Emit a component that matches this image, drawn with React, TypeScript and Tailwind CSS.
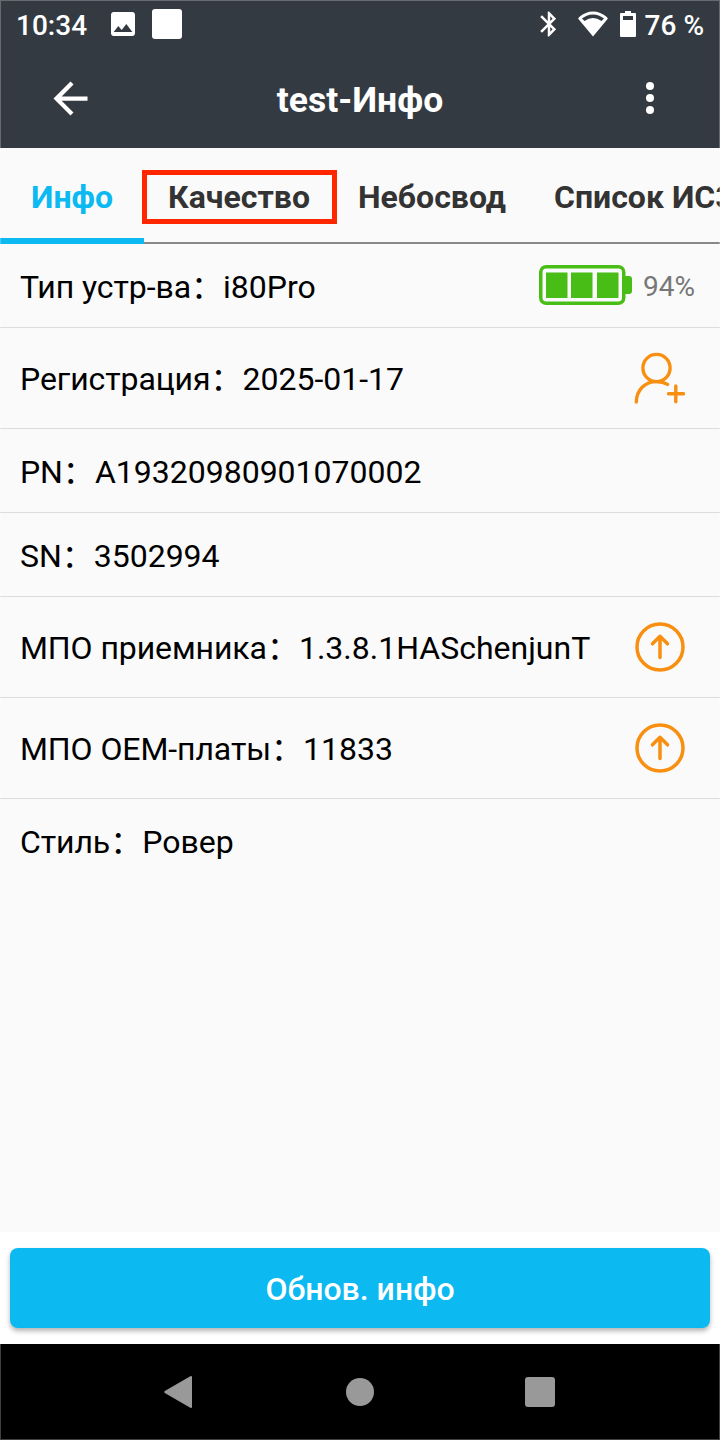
import React from 'react';

const TABS = ['Инфо', 'Качество', 'Небосвод', 'Список ИСЗ'];

type RowAction = 'battery' | 'register' | 'upgrade';

interface InfoItem {
  label: string;
  value: string;
  action?: RowAction;
}

const ITEMS: InfoItem[] = [
  { label: 'Тип устр-ва', value: 'i80Pro', action: 'battery' },
  { label: 'Регистрация', value: '2025-01-17', action: 'register' },
  { label: 'PN', value: 'A19320980901070002' },
  { label: 'SN', value: '3502994' },
  { label: 'МПО приемника', value: '1.3.8.1HASchenjunT', action: 'upgrade' },
  { label: 'МПО OEM-платы', value: '11833', action: 'upgrade' },
  { label: 'Стиль', value: 'Ровер' },
];

const StatusBar: React.FC = () => (
  <div className="flex h-[50px] items-center px-4 text-[28px] font-medium text-white">
    <span className="w-[91px] pt-[2px]">10:34</span>
    <svg className="-mt-[2px] h-8 w-8" viewBox="0 0 24 24" fill="currentColor">
      <path d="M21 19V5c0-1.1-.9-2-2-2H5c-1.1 0-2 .9-2 2v14c0 1.1.9 2 2 2h14c1.1 0 2-.9 2-2zM8.5 13.5l2.5 3.01L14.5 12l4.5 6H5l3.5-4.5z" />
    </svg>
    <div className="-mt-[2px] ml-[13px] h-[30px] w-[30px] rounded-[3px] bg-white" />

    <svg className="-mt-[2px] ml-auto h-[30px] w-[30px]" viewBox="0 0 24 24" fill="currentColor">
      <path d="M17.71 7.71L12 2h-1v7.59L6.41 5 5 6.41 10.59 12 5 17.59 6.41 19 11 14.41V22h1l5.71-5.71-4.3-4.29 4.3-4.29zM13 5.83l1.88 1.88L13 9.59V5.83zm1.88 10.46L13 18.17v-3.76l1.88 1.88z" />
    </svg>
    <svg className="-mt-[2px] ml-[14px] h-[26px] w-[30px]" viewBox="0 0 30 26" fill="currentColor">
      <path d="M1.5 7.5Q15-3.6 28.5 7.5" fill="none" stroke="currentColor" strokeWidth="2.8" />
      <path d="M0 7.5L15 25.5 30 7.5 27.5 6 23.5 10Q15 4 6.5 10L2.5 6z" />
    </svg>
    <svg className="-mt-[2px] ml-3 mr-[9px] h-[26px] w-4" viewBox="0 0 16 26" fill="currentColor">
      <path fillRule="evenodd" d="M5 0h6v2h4a1 1 0 0 1 1 1v22a1 1 0 0 1-1 1H1a1 1 0 0 1-1-1V3a1 1 0 0 1 1-1h4zM3 5v4h10V5z" />
    </svg>
    <span className="pt-[2px]">76 %</span>
  </div>
);

const Header: React.FC = () => (
  <header className="flex h-[98px] items-center justify-between pl-[45px] pr-[46px] text-white">
    <svg className="-mt-[2px] h-[51px] w-[51px]" viewBox="0 0 24 24" fill="currentColor">
      <path d="M20 11H7.83l5.59-5.59L12 4l-8 8 8 8 1.41-1.41L7.83 13H20v-2z" />
    </svg>
    <h1 className="pr-[2px] pt-1 text-[35.5px] font-bold">test-Инфо</h1>
    <svg className="-mt-[2px] h-12 w-12" viewBox="0 0 48 48" fill="currentColor">
      <circle cx="24" cy="12" r="4" />
      <circle cx="24" cy="24" r="4" />
      <circle cx="24" cy="36" r="4" />
    </svg>
  </header>
);

const Tabs: React.FC = () => (
  <nav className="relative flex h-24 overflow-hidden border-b-2 border-[#888888] text-[32px] font-bold text-[#333333]">
    {TABS.map((tab, i) => (
      <div
        key={tab}
        className={`flex min-w-36 shrink-0 items-center justify-center px-6 pt-1 ${i === 0 ? 'text-[#0cb9f0]' : ''}`}
      >
        {tab}
      </div>
    ))}
    {/* Highlight around the quality tab */}
    <div className="absolute left-[142px] top-[22px] h-[54px] w-[195px] border-[5px] border-[#ff2600]" />
  </nav>
);

const Battery: React.FC = () => (
  <div className="flex items-center gap-[10px] text-[28px] text-[#777777]">
    <svg className="-mt-px h-10 w-[94px]" viewBox="0 0 94 40" fill="#47bd15">
      <rect x="1.75" y="1.75" width="83" height="36.5" rx="5.5" fill="none" stroke="#47bd15" strokeWidth="3.5" />
      <path d="M86 11h4a3 3 0 0 1 3 3v12a3 3 0 0 1-3 3h-4z" />
      <rect x="7" y="7.5" width="21.5" height="25.5" />
      <rect x="32" y="7.5" width="21.5" height="25.5" />
      <rect x="58" y="7.5" width="21.5" height="25.5" />
    </svg>
    <span className="pt-[2px]">94%</span>
  </div>
);

const Action: React.FC<{ type: RowAction }> = ({ type }) => {
  switch (type) {
    case 'battery':
      return <Battery />;
    case 'register':
      return (
        <svg className="mr-[10px] h-[52px] w-[52px]" viewBox="0 0 52 52" fill="none" stroke="#f88f10" strokeWidth="3.4" strokeLinecap="round">
          <circle cx="23.5" cy="16" r="13.6" />
          <path d="M3.3 50C3.5 38 12 29.6 23.5 29.6c4.2 0 7.800.9 11 2.800M35.5 41.7h15M42.8 34v15.800" />
        </svg>
      );
    default:
      return (
        <svg className="mr-[10px] h-[50px] w-[50px]" viewBox="0 0 50 50" fill="none" stroke="#f88f10" strokeWidth="3.5" strokeLinecap="round" strokeLinejoin="round">
          <circle cx="25" cy="25" r="23" />
          <path d="M25 35.5V14.3M17.5 21.8L25 14.3l7.5 7.5" />
        </svg>
      );
  }
};

const InfoRow: React.FC<{ item: InfoItem; last: boolean }> = ({ item, last }) => {
  const tall = item.action === 'register' || item.action === 'upgrade';

  return (
    <div
      className={`flex items-center justify-between pl-5 pr-[25px] ${tall ? 'h-[101px]' : 'h-[84px]'} ${last ? '' : 'border-b border-[#dcdcdc]'}`}
    >
      <div lang="zh-CN" className="flex h-12 items-center whitespace-pre pt-[2px] text-[32px] leading-[48px] text-black">
        <span className="tracking-[-0.08px]">{item.label}</span>
        <span>：{item.value}</span>
      </div>
      {item.action && <Action type={item.action} />}
    </div>
  );
};

const NavBar: React.FC = () => (
  <div className="grid h-24 grid-cols-3 place-items-center bg-black px-[90px] text-[#999999]">
    <svg className="h-9 w-9" viewBox="0 0 36 36" fill="currentColor">
      <path d="M28.3 2.3Q30 1.5 30 3.3v29.4q0 1.8-1.7 1L2.8 19q-1.5-1 0-2z" />
    </svg>
    <div className="h-7 w-7 rounded-full bg-[#999999]" />
    <div className="h-[30px] w-[30px] rounded-[3px] bg-[#999999]" />
  </div>
);

export default function App() {
  return (
    <div className="relative flex h-[1440px] w-[720px] flex-col overflow-hidden bg-[#fafafa] font-['Roboto','Noto_Sans_CJK_SC',sans-serif]">
      <div className="bg-[#343a42]">
        <StatusBar />
        <Header />
      </div>

      <div className="relative">
        <Tabs />
        {/* Active tab indicator */}
        <div className="absolute bottom-0 left-0 h-[6px] w-36 bg-[#0cb9f0]" />
      </div>

      <main className="flex-1">
        {ITEMS.map((item, i) => (
          <InfoRow key={item.label} item={item} last={i === ITEMS.length - 1} />
        ))}
      </main>

      <div className="h-28 bg-white px-[10px] pt-4">
        <button className="h-20 w-full rounded-lg bg-[#0cb9f0] pt-[2px] text-[32px] font-medium text-white shadow-[0_3px_5px_rgba(0,0,0,0.3)]">
          Обнов. инфо
        </button>
      </div>

      <NavBar />

      {/* Thin screen edge */}
      <div className="pointer-events-none absolute inset-0 border border-white/25" />
    </div>
  );
}
